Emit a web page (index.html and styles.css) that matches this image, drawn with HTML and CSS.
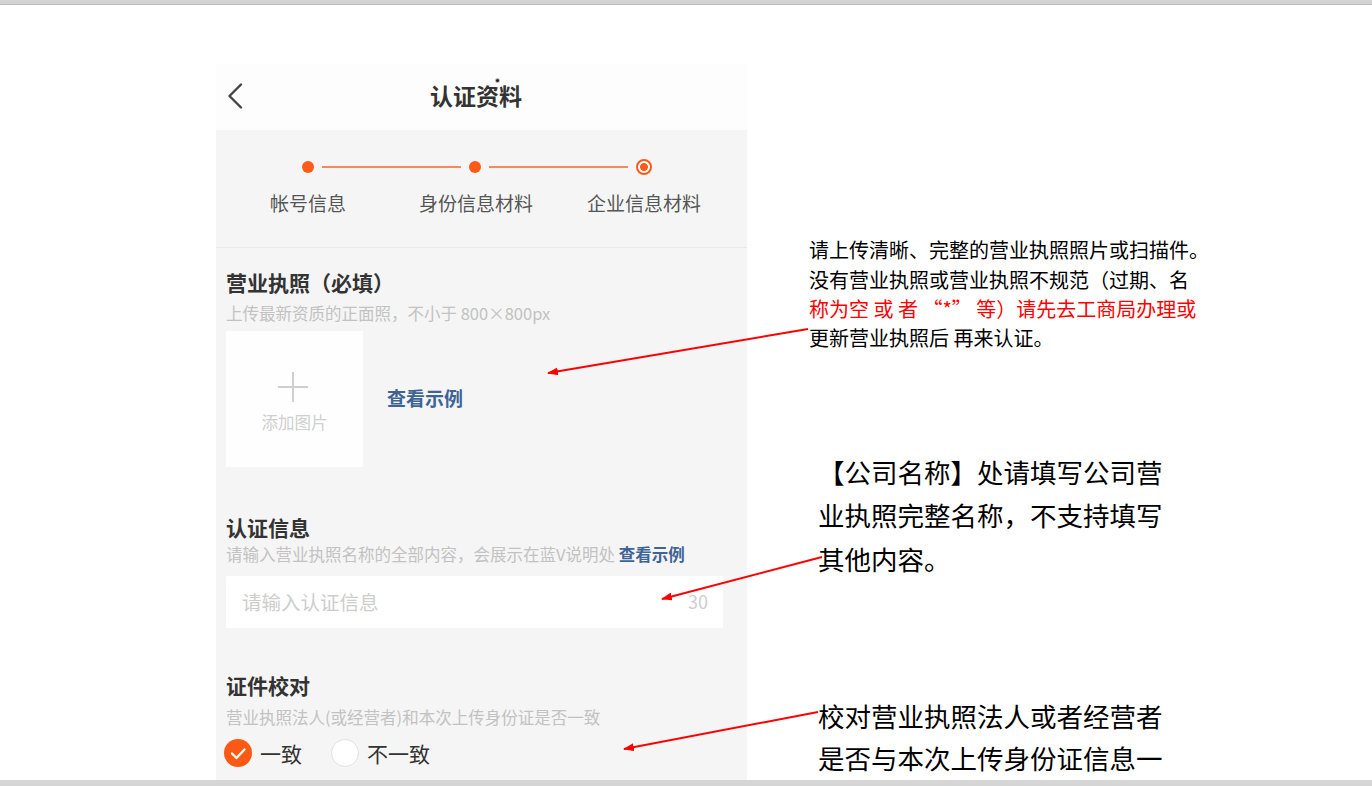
FILE: index.html
```html
<!DOCTYPE html>
<html lang="zh-CN">
<head>
<meta charset="utf-8">
<title>认证资料</title>
<link rel="stylesheet" href="styles.css">
</head>
<body>
<div class="topbar"></div>
<main class="slide">
  <section class="phone">
    <header class="nav">
      <svg class="back" width="16" height="26" viewBox="0 0 16 26"><path d="M14 1.5 L2.5 13 L14 24.5"/></svg>
      <h1 class="title">认证资料</h1>
      <span class="speck"></span>
    </header>
    <div class="steps">
      <div class="track">
        <span class="dot"></span><span class="line"></span><span class="dot"></span><span class="line"></span><span class="dot ring"></span>
      </div>
      <div class="labels"><span>帐号信息</span><span>身份信息材料</span><span>企业信息材料</span></div>
    </div>
    <div class="form">
      <section class="block first">
        <h2>营业执照（必填）</h2>
        <p class="hint">上传最新资质的正面照，不小于 800×800px</p>
        <div class="upload-row">
          <div class="upload"><span class="plus"></span><span class="upload-text">添加图片</span></div>
          <span class="link big">查看示例</span>
        </div>
      </section>
      <section class="block second">
        <h2>认证信息</h2>
        <p class="hint tight">请输入营业执照名称的全部内容，会展示在蓝V说明处 <span class="link">查看示例</span></p>
        <div class="input"><span class="placeholder">请输入认证信息</span><span class="count">30</span></div>
      </section>
      <section class="block third">
        <h2>证件校对</h2>
        <p class="hint">营业执照法人(或经营者)和本次上传身份证是否一致</p>
        <div class="radios">
          <span class="radio"><span class="circle checked"><svg width="28" height="28" viewBox="0 0 28 28"><path d="M8 14.5 L12.5 19 L20.5 10.5"/></svg></span>一致</span>
          <span class="radio"><span class="circle"></span>不一致</span>
        </div>
      </section>
    </div>
  </section>
  <aside class="notes">
    <p class="note-a">请上传清晰、完整的营业执照照片或扫描件。<br>没有营业执照或营业执照不规范（过期、名<br><span class="red">称为空 或 者 “*” 等）请先去工商局办理或</span><br>更新营业执照后 再来认证。</p>
    <p class="note-b">【公司名称】处请填写公司营业执照完整名称，不支持填写其他内容。</p>
    <p class="note-c">校对营业执照法人或者经营者是否与本次上传身份证信息一</p>
  </aside>
</main>
<div class="bottombar"></div>
<svg class="arrows" width="1372" height="786" viewBox="0 0 1372 786">
  <defs>
    <marker id="head" markerUnits="userSpaceOnUse" markerWidth="11" markerHeight="8" refX="10" refY="4" orient="auto">
      <path d="M0 0 L11 4 L0 8 Z" fill="#ff0000"/>
    </marker>
  </defs>
  <line x1="808" y1="329" x2="548" y2="373" marker-end="url(#head)"/>
  <line x1="822" y1="557" x2="662" y2="599" marker-end="url(#head)"/>
  <line x1="818" y1="712" x2="624" y2="749" marker-end="url(#head)"/>
</svg>
</body>
</html>
```
FILE: styles.css
```css
* { box-sizing: border-box; margin: 0; padding: 0; }
html, body { width: 1372px; height: 786px; overflow: hidden; }
body {
  position: relative;
  background: #fff;
  font-family: "Noto Sans CJK SC", "Noto Sans", sans-serif;
  color: #333;
}
.topbar { height: 5px; background: #d3d3d3; border-bottom: 1px solid #bcbcbc; }
.bottombar { height: 6px; background: #d5d5d5; }
.slide { height: 775px; display: flex; overflow: hidden; }

/* phone */
.phone { margin-left: 216px; width: 531px; display: flex; flex-direction: column; }
.nav {
  position: relative;
  margin-top: 59px;
  height: 66px;
  background: #fdfdfd;
  display: flex;
  align-items: center;
  justify-content: center;
  padding: 0 11px 4px 0;
}
.back { position: absolute; left: 11px; top: 19px; }
.back path { fill: none; stroke: #444; stroke-width: 2.4; stroke-linecap: round; stroke-linejoin: round; }
.title { font-size: 23px; font-weight: 700; color: #333; line-height: 30px; }
.speck {
  position: absolute; left: 280px; top: 15px;
  width: 3px; height: 3px; border-radius: 50%;
  background: #222; box-shadow: 0 0 0 1px #bbb;
}

.steps { height: 118px; background: #f5f5f5; border-bottom: 1px solid #e9e9e9; }
.track {
  display: flex; align-items: center;
  height: 16px; margin-top: 29px;
  padding-left: 86px; padding-right: 95px;
}
.dot { width: 12px; height: 12px; border-radius: 50%; background: #fd5a1a; flex: none; }
.dot.ring {
  width: 16px; height: 16px;
  border: 2px solid #fd5a1a;
  background: radial-gradient(circle, #fd5a1a 0 3.6px, #fff 4.2px);
}
.line { flex: 1; height: 2px; margin: 0 8px; background: #f28a5e; }
.labels {
  display: grid; grid-template-columns: repeat(3, 168px);
  padding-left: 8px; margin-top: 15px;
  font-size: 19px; line-height: 26px; color: #555;
}
.labels span { text-align: center; }

.form { flex: 1; background: #f5f5f5; padding: 0 24px 0 10px; }
.block h2 { font-size: 21px; font-weight: 700; line-height: 30px; color: #333; }
.hint { font-size: 16.5px; line-height: 24px; color: #c2c2c2; margin-top: 4px; white-space: nowrap; }
.hint.tight { margin-top: 0; }
.link { color: #3e6496; font-weight: 700; }
.link.big { font-size: 19px; margin-left: 24px; margin-bottom: 3px; }

.first { padding-top: 19px; }
.upload-row { display: flex; align-items: center; margin-top: 6px; }
.upload {
  width: 137px; height: 136px; background: #fefefe;
  display: flex; flex-direction: column; align-items: center;
  padding-top: 41px;
}
.plus { position: relative; width: 30px; height: 30px; margin-left: -3px; }
.plus::before, .plus::after { content: ""; position: absolute; background: #cfcfcf; }
.plus::before { left: 0; right: 0; top: 14px; height: 1.5px; }
.plus::after { top: 0; bottom: 0; left: 14px; width: 1.5px; }
.upload-text { font-size: 16.5px; line-height: 22px; color: #cfcfcf; margin-top: 9px; }

.second { padding-top: 45px; }
.input {
  margin-top: 10px; height: 52px; background: #fff; border-radius: 2px;
  display: flex; align-items: center; justify-content: space-between;
  padding: 0 15px 2px 16px;
}
.placeholder { font-size: 19.5px; color: #cdcdcd; }
.count { font-size: 18px; color: #cdcdcd; }

.third { padding-top: 42px; }
.third .hint { margin-top: 4.5px; }
.radios { display: flex; align-items: center; margin-top: 10px; margin-left: -2px; height: 28px; }
.radio { display: flex; align-items: center; font-size: 21px; color: #333; margin-right: 29px; }
.circle {
  width: 28px; height: 28px; border-radius: 50%;
  background: #fff; border: 1.5px solid #e2e2e2;
  margin-right: 8px; flex: none;
}
.circle.checked { background: #fc5a14; border: none; }
.circle svg { display: block; }
.circle path { fill: none; stroke: #fff; stroke-width: 2.3; stroke-linecap: round; stroke-linejoin: round; }

/* notes */
.notes { margin-left: 62px; display: flex; flex-direction: column; align-items: flex-start; color: #000; }
.note-a { margin-top: 230.3px; font-size: 20px; line-height: 29.3px; white-space: nowrap; }
.red { color: #ff0000; }
.note-b { margin-left: 9px; margin-top: 97.5px; width: 350px; font-size: 26.5px; line-height: 43.5px; }
.note-c { margin-left: 9px; margin-top: 114.5px; width: 350px; font-size: 26.5px; line-height: 42px; }

.arrows { position: absolute; left: 0; top: 0; pointer-events: none; }
.arrows line { stroke: #ff0000; stroke-width: 2; }
```
